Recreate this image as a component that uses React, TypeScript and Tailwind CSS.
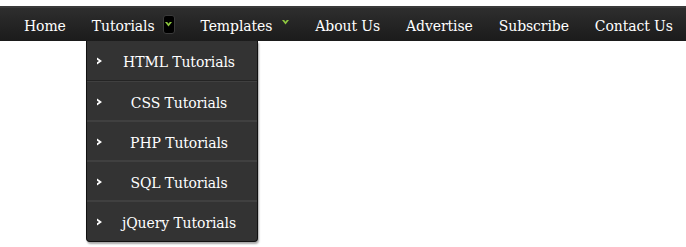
import React from 'react';

const navItems = ['Home', 'Tutorials', 'Templates', 'About Us', 'Advertise', 'Subscribe', 'Contact Us'];
const tutorials = ['HTML Tutorials', 'CSS Tutorials', 'PHP Tutorials', 'SQL Tutorials', 'jQuery Tutorials'];

const Chevron = ({ color }: { color: string }) => (
  <svg width="7" height="5" viewBox="0 0 7 5" className="block">
    <path d="M0 0 L3.5 4.5 L7 0 L4.8 0 L3.5 1.8 L2.2 0 Z" fill={color} />
  </svg>
);

const RightArrow = () => (
  <svg width="6" height="8" viewBox="0 0 6 8" className="block">
    <path d="M0 0.5 L5 4 L0 7.5 L0 5.3 L2 4 L0 2.7 Z" fill="#ffffff" />
  </svg>
);

export default function App() {
  return (
    <div className="w-[686px] h-[247px] bg-white relative" style={{ fontFamily: '"DejaVu Serif", serif' }}>
      <div className="h-[6px]" />
      {/* Main bar */}
      <nav className="h-[35px] border-t-2 border-[#3a3a3a] bg-gradient-to-b from-[#2e2e2e] to-[#1b1b1b] flex items-center pl-[11px]">
        {navItems.map((item) => (
          <div key={item} className="relative flex items-center h-full pt-[3px] px-[13px] text-[14px] text-white tracking-[-0.1px]">
            <span>{item}</span>
            {item === 'Tutorials' && (
              <span className="ml-[8px] -mt-[3px] w-[12px] h-[19px] rounded-[3px] bg-black border border-[#3a3a3a] flex items-center justify-center">
                <Chevron color="#8dc63f" />
              </span>
            )}
            {item === 'Templates' && (
              <span className="ml-[10px] -mt-[8px]">
                <Chevron color="#8dc63f" />
              </span>
            )}
          </div>
        ))}
      </nav>

      {/* Dropdown */}
      <ul className="absolute left-[86px] top-[41px] w-[172px] bg-[#333333] border-x border-b border-[#111111] rounded-b-[4px] shadow-[1px_2px_2px_rgba(0,0,0,0.35)] overflow-hidden">
        {tutorials.map((t, i) => (
          <li
            key={t}
            className={`relative h-[40px] flex items-center justify-center pl-[14px] pt-[4px] text-[14px] text-white tracking-[-0.1px] ${i > 0 ? 'border-t border-[#404040]' : ''} ${i < tutorials.length - 1 ? 'border-b border-[#242424]' : ''}`}
          >
            <span className="absolute left-[10px] top-[16px]">
              <RightArrow />
            </span>
            {t}
          </li>
        ))}
      </ul>
    </div>
  );
}
